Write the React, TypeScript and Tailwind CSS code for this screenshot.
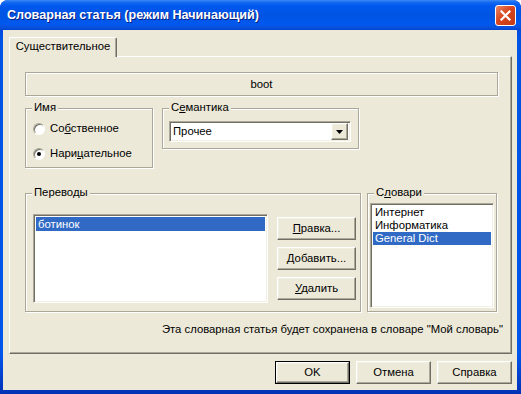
import React from "react";

const etched =
  "border border-[#ACA899] shadow-[inset_1px_1px_0_#FFFFFF,1px_1px_0_#FFFFFF]";
const sunken =
  "border border-t-[#ACA899] border-l-[#ACA899] border-b-white border-r-white shadow-[inset_1px_1px_0_#716F64,inset_-1px_-1px_0_#F1EFE2]";
const raised =
  "border border-t-white border-l-white border-b-[#716F64] border-r-[#716F64] shadow-[inset_-1px_-1px_0_#ACA899,inset_1px_1px_0_#F1EFE2] bg-[#ECE9D8]";

function Group({
  label,
  className,
  children,
}: {
  label: React.ReactNode;
  className: string;
  children?: React.ReactNode;
}) {
  return (
    <div className={`relative ${etched} ${className}`}>
      <span className="absolute -top-[8px] left-[6px] bg-[#ECE9D8] px-[2px] leading-[13px]">
        {label}
      </span>
      {children}
    </div>
  );
}

function Radio({ checked, label }: { checked?: boolean; label: React.ReactNode }) {
  return (
    <div className="flex items-center h-[13px] gap-[5px]">
      <div className="w-[12px] h-[12px] rounded-full bg-white border border-t-[#ACA899] border-l-[#ACA899] border-b-white border-r-white shadow-[inset_1px_1px_0_#716F64] flex items-center justify-center">
        {checked && <div className="w-[4px] h-[4px] rounded-full bg-black" />}
      </div>
      <span className="leading-[13px]">{label}</span>
    </div>
  );
}

function Btn({
  children,
  className = "",
}: {
  children: React.ReactNode;
  className?: string;
}) {
  return (
    <div className={`${raised} flex items-center justify-center ${className}`}>
      {children}
    </div>
  );
}

export default function App() {
  return (
    <div className="w-[521px] h-[394px] font-['Liberation_Sans',Arial,sans-serif] text-[11.3px] text-black bg-white">
      <div className="w-[521px] h-[394px] rounded-t-[8px] bg-[linear-gradient(to_bottom,#0831D9,#0054E3_10%,#0055EA_90%,#0031B5)] pl-[3px] pr-[4px] pb-[4px] flex flex-col">
        {/* title bar */}
        <div className="h-[30px] -ml-[3px] -mr-[4px] rounded-t-[8px] bg-[linear-gradient(to_bottom,#3C8CF5_0%,#1468F0_8%,#0058EE_20%,#0054E3_50%,#0058EE_80%,#0A4FDB_93%,#0042CE_100%)] flex items-center justify-between pl-[7px] pr-[5px]">
          <span className="text-white font-bold text-[12.6px] font-['Liberation_Sans',Arial,sans-serif] [text-shadow:1px_1px_0_#0A1E80]">
            Словарная статья (режим Начинающий)
          </span>
          <div className="w-[21px] h-[21px] rounded-[3px] border border-white bg-[linear-gradient(135deg,#E8876A,#D9461F_45%,#C23A14)] flex items-center justify-center">
            <svg width="11" height="11" viewBox="0 0 11 11">
              <path d="M1.5 1.5 L9.5 9.5 M9.5 1.5 L1.5 9.5" stroke="white" strokeWidth="2.2" strokeLinecap="square" />
            </svg>
          </div>
        </div>

        {/* client area */}
        <div className="flex-1 bg-[#ECE9D8] pt-[7px] pl-[6px] pr-[5px] flex flex-col">
          {/* tab strip */}
          <div className="flex h-[19px]">
            <div className="relative z-10 h-[20px] w-[108px] border-l border-t border-r border-l-white border-t-white border-r-[#716F64] rounded-tr-[2px] bg-[#ECE9D8] shadow-[inset_-1px_0_0_#ACA899] flex items-center justify-center pb-[2px]">
              Существительное
            </div>
          </div>
          {/* panel */}
          <div className="h-[298px] w-[503px] border border-l-white border-t-white border-r-[#716F64] border-b-[#716F64] shadow-[inset_-1px_-1px_0_#ACA899] pl-[15px] pt-[15px] flex flex-col">
            <div className={`${etched} w-[473px] h-[24px] flex items-center justify-center`}>
              boot
            </div>

            <div className="flex mt-[12px] gap-[9px] items-start">
              <Group label="Имя" className="w-[128px] h-[60px] pt-[13px] pl-[7px] flex flex-col gap-[12px]">
                <Radio
                  label={
                    <>
                      Со<u>б</u>ственное
                    </>
                  }
                />
                <Radio
                  checked
                  label={
                    <>
                      Нари<u>ц</u>ательное
                    </>
                  }
                />
              </Group>
              <Group
                label={
                  <>
                    С<u>е</u>мантика
                  </>
                }
                className="w-[197px] h-[41px] pt-[12px] pl-[6px]"
              >
                <div className={`${sunken} w-[182px] h-[21px] bg-white flex items-center justify-between pl-[3px] pr-[2px]`}>
                  <span>Прочее</span>
                  <div className={`${raised} w-[17px] h-[17px] flex items-center justify-center`}>
                    <svg width="7" height="4" viewBox="0 0 7 4">
                      <path d="M0 0 H7 L3.5 4 Z" fill="black" />
                    </svg>
                  </div>
                </div>
              </Group>
            </div>

            <div className="flex mt-[25px] gap-[6px] items-start">
              <Group label="Переводы" className="w-[336px] h-[119px] pt-[20px] pl-[7px] flex gap-[9px]">
                <div className={`${sunken} w-[235px] h-[89px] bg-white p-[2px]`}>
                  <div className="h-[14px] bg-[#316AC5] text-white pl-[2px] flex items-center">ботинок</div>
                </div>
                <div className="flex flex-col gap-[7px] pt-[3px]">
                  <Btn className="w-[79px] h-[23px]">
                    <span>
                      <u>П</u>равка...
                    </span>
                  </Btn>
                  <Btn className="w-[79px] h-[23px]">
                    <span>
                      <u>Д</u>обавить...
                    </span>
                  </Btn>
                  <Btn className="w-[79px] h-[23px]">
                    <span>
                      <u>У</u>далить
                    </span>
                  </Btn>
                </div>
              </Group>
              <Group
                label={
                  <>
                    С<u>л</u>овари
                  </>
                }
                className="w-[130px] h-[119px] pt-[9px] pl-[2px]"
              >
                <div className={`${sunken} w-[124px] h-[105px] bg-white p-[2px] flex flex-col`}>
                  <div className="h-[13px] pl-[2px] flex items-center">Интернет</div>
                  <div className="h-[13px] pl-[2px] flex items-center">Информатика</div>
                  <div className="h-[13px] pl-[2px] flex items-center bg-[#316AC5] text-white">General Dict</div>
                </div>
              </Group>
            </div>

            <div className="mt-[11px] pr-[8px] text-right leading-[13px]">
              Эта словарная статья будет сохранена в словаре "Мой словарь"
            </div>
          </div>

          {/* bottom buttons */}
          <div className="flex justify-end gap-[6px] mt-[7px]">
            <div className="w-[75px] h-[23px] border border-black flex">
              <Btn className="flex-1">OK</Btn>
            </div>
            <Btn className="w-[75px] h-[23px]">Отмена</Btn>
            <Btn className="w-[75px] h-[23px]">Справка</Btn>
          </div>
        </div>
      </div>
    </div>
  );
}
